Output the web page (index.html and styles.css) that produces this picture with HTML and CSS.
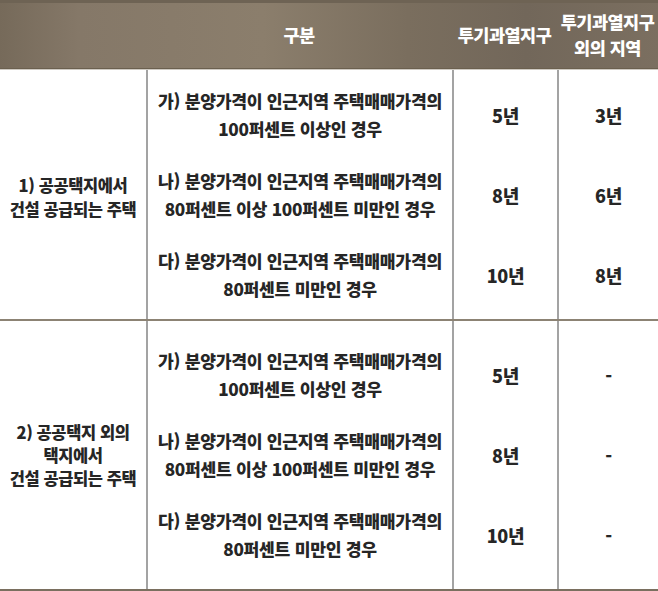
FILE: index.html
```html
<!DOCTYPE html>
<html lang="ko">
<head>
<meta charset="utf-8">
<link rel="stylesheet" href="styles.css">
</head>
<body>
<div class="table">
  <div class="head">
    <div class="hcell"></div>
    <div class="hcell">구분</div>
    <div class="hcell">투기과열지구</div>
    <div class="hcell two">투기과열지구<br>외의 지역</div>
  </div>
  <div class="group g1">
    <div class="cell cat">1) 공공택지에서<br>건설 공급되는 주택</div>
    <div class="cell stack">
      <p>가) 분양가격이 인근지역 주택매매가격의<br>100퍼센트 이상인 경우</p>
      <p>나) 분양가격이 인근지역 주택매매가격의<br>80퍼센트 이상 100퍼센트 미만인 경우</p>
      <p>다) 분양가격이 인근지역 주택매매가격의<br>80퍼센트 미만인 경우</p>
    </div>
    <div class="cell stack num">
      <p>5년</p><p>8년</p><p>10년</p>
    </div>
    <div class="cell stack num">
      <p>3년</p><p>6년</p><p>8년</p>
    </div>
  </div>
  <div class="group g2">
    <div class="cell cat">2) 공공택지 외의<br>택지에서<br>건설 공급되는 주택</div>
    <div class="cell stack">
      <p>가) 분양가격이 인근지역 주택매매가격의<br>100퍼센트 이상인 경우</p>
      <p>나) 분양가격이 인근지역 주택매매가격의<br>80퍼센트 이상 100퍼센트 미만인 경우</p>
      <p>다) 분양가격이 인근지역 주택매매가격의<br>80퍼센트 미만인 경우</p>
    </div>
    <div class="cell stack num">
      <p>5년</p><p>8년</p><p>10년</p>
    </div>
    <div class="cell stack num">
      <p>-</p><p>-</p><p>-</p>
    </div>
  </div>
</div>
</body>
</html>
```

FILE: styles.css
```css
html, body {
  margin: 0;
  padding: 0;
  background: #ffffff;
}

.table {
  width: 658px;
  font-family: "Noto Sans CJK KR", "Noto Sans", sans-serif;
  font-weight: 900;
  color: #262626;
}

.head,
.group {
  display: grid;
  grid-template-columns: 146px 306px 105px 101px;
}

.head {
  height: 69px;
  background: linear-gradient(90deg, #766a5a 0%, #857868 12%, #8b7e6c 40%, #7a6e5e 62%, #72675a 80%, #7b6f60 100%);
  border-top: 3px solid #6e6354;
  box-sizing: border-box;
  border-bottom: 1px solid #6b604f;
  box-shadow: 0 1px 0 #cfcac2;
  color: #ffffff;
  font-size: 17.5px;
  letter-spacing: -0.5px;
}

.hcell {
  display: flex;
  align-items: center;
  justify-content: center;
  text-align: center;
  line-height: 26px;
  padding-bottom: 1px;
}

.g1 {
  height: 249px;
  margin-top: 1px;
  border-bottom: 2px solid #8c8374;
}

.g2 {
  height: 268px;
  border-bottom: 2px solid #7a6f5f;
}

.cell {
  display: flex;
  align-items: center;
  justify-content: center;
  text-align: center;
}

.cell + .cell {
  border-left: 2px solid #a3a3a3;
}

.cat {
  font-size: 16.5px;
  line-height: 24px;
  letter-spacing: -0.4px;
  padding-top: 4px;
}

.g2 .cat {
  line-height: 23px;
  padding-top: 0;
}

.stack {
  flex-direction: column;
  gap: 24px;
  font-size: 17.2px;
  line-height: 28px;
  letter-spacing: -0.3px;
}

.stack p {
  margin: 0;
  height: 56px;
  display: flex;
  align-items: center;
  justify-content: center;
}

.num {
  font-size: 18px;
}
```
